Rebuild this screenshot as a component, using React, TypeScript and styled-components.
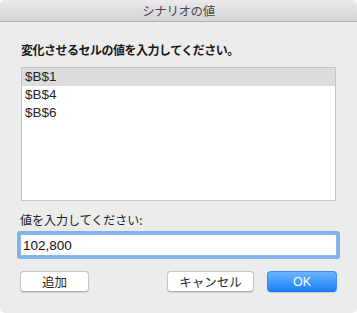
import React from "react";
import styled, { createGlobalStyle } from "styled-components";

const Global = createGlobalStyle`
  html, body { margin: 0; padding: 0; background: #ffffff; }
  body { font-family: "Liberation Sans", "Noto Sans CJK JP", sans-serif; }
  * { box-sizing: border-box; }
`;

const Window = styled.div`
  width: 357px;
  height: 313px;
  background: #ececec;
  border-radius: 5px;
  overflow: hidden;
  display: flex;
  flex-direction: column;
`;

const TitleBar = styled.div`
  height: 22px;
  flex: none;
  background: linear-gradient(#ebe9eb, #d5d3d5);
  border-bottom: 1px solid #b3b1b3;
  display: flex;
  align-items: center;
  justify-content: center;
  font-family: "Noto Sans CJK JP", sans-serif;
  font-size: 12.5px;
  color: #4a4a4a;
  letter-spacing: -0.4px;
`;

const Content = styled.div`
  display: flex;
  flex-direction: column;
  padding: 20px 20px 0 20px;
`;

const Prompt = styled.div`
  font-family: "Noto Sans CJK JP", sans-serif;
  font-weight: 700;
  font-size: 12px;
  line-height: 16px;
  letter-spacing: -0.5px;
  color: #1a1a1a;
  padding-left: 1px;
`;

const List = styled.div`
  margin: 9px 1px 0 1px;
  height: 134px;
  background: #ffffff;
  border: 1px solid #c3c3c3;
  display: flex;
  flex-direction: column;
`;

const Row = styled.div<{ $selected?: boolean }>`
  height: 18px;
  line-height: 18px;
  padding-left: 3px;
  font-size: 13.5px;
  color: #262626;
  background: ${(p) => (p.$selected ? "#dcdcdc" : "transparent")};
`;

const Label = styled.div`
  margin-top: 11px;
  font-family: "Noto Sans CJK JP", sans-serif;
  font-size: 12px;
  line-height: 16px;
  color: #1e1e1e;
`;

const Input = styled.input`
  margin-top: 6px;
  height: 22px;
  width: 100%;
  border: 1px solid #8fb8e8;
  box-shadow: 0 0 0 3px #80b3ec;
  border-radius: 1px;
  outline: none;
  padding: 0 0 0 2px;
  font-family: "Liberation Sans", sans-serif;
  font-size: 13.5px;
  color: #111;
  background: #fff;
`;

const Buttons = styled.div`
  margin-top: 15px;
  display: flex;
  align-items: center;
`;

const Button = styled.button<{ $w: number; $primary?: boolean }>`
  width: ${(p) => p.$w}px;
  height: 21px;
  border-radius: 4px;
  font-family: "Liberation Sans", "Noto Sans CJK JP", sans-serif;
  font-size: 12.5px;
  padding: 0;
  display: flex;
  align-items: center;
  justify-content: center;
  border: 1px solid ${(p) => (p.$primary ? "#3d8ff8" : "#c4c4c4")};
  border-bottom-color: ${(p) => (p.$primary ? "#1f6fe6" : "#adadad")};
  background: ${(p) =>
    p.$primary ? "linear-gradient(#6db4fb, #1a83fb)" : "#ffffff"};
  color: ${(p) => (p.$primary ? "#ffffff" : "#262626")};
  box-shadow: 0 0.5px 1px rgba(0, 0, 0, 0.12);
`;

const Spacer = styled.div`
  flex: 1;
`;

const Gap = styled.div`
  width: 13px;
`;

export default function App() {
  return (
    <>
      <Global />
      <Window>
        <TitleBar>シナリオの値</TitleBar>
        <Content>
          <Prompt>変化させるセルの値を入力してください。</Prompt>
          <List>
            <Row $selected>$B$1</Row>
            <Row>$B$4</Row>
            <Row>$B$6</Row>
          </List>
          <Label>値を入力してください:</Label>
          <Input defaultValue="102,800" />
          <Buttons>
            <Button $w={69}>追加</Button>
            <Spacer />
            <Button $w={87}>キャンセル</Button>
            <Gap />
            <Button $w={70} $primary>
              OK
            </Button>
          </Buttons>
        </Content>
      </Window>
    </>
  );
}
